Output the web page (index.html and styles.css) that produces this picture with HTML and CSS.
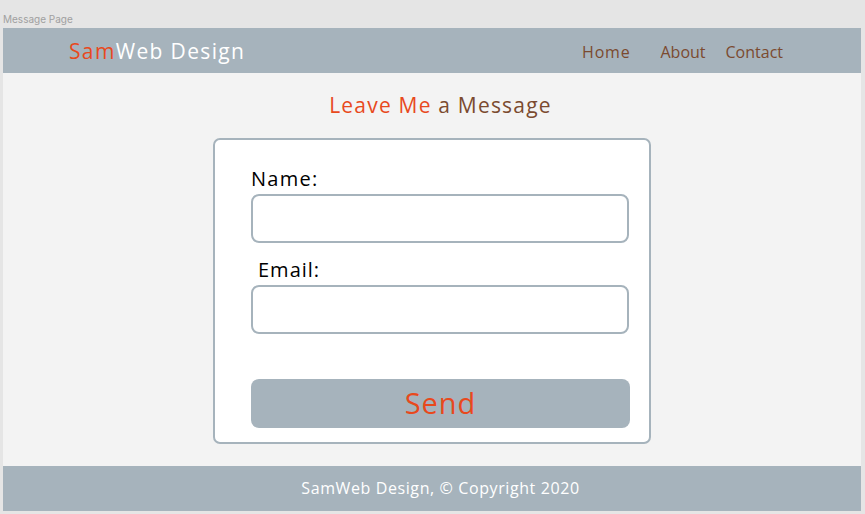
FILE: index.html
```html
<!DOCTYPE html>
<html lang="en">
<head>
<meta charset="utf-8">
<title>Message Page</title>
<link rel="stylesheet" href="styles.css">
</head>
<body>
<div class="canvas-label">Message Page</div>
<div class="frame">
  <header class="topbar">
    <div class="logo"><span class="accent">Sam</span>Web Design</div>
    <nav class="nav">
      <a class="nav-link home">Home</a>
      <a class="nav-link">About</a>
      <a class="nav-link">Contact</a>
    </nav>
  </header>
  <main class="main">
    <h1 class="title"><span class="accent">Leave Me</span> a Message</h1>
    <form class="card">
      <label class="field-label">Name:</label>
      <div class="input"></div>
      <label class="field-label email">Email:</label>
      <div class="input"></div>
      <div class="send">Send</div>
    </form>
  </main>
  <footer class="footer">SamWeb Design, © Copyright 2020</footer>
</div>
</body>
</html>
```
FILE: styles.css
```css
* { box-sizing: border-box; }
html, body { margin: 0; padding: 0; }
body {
  background: #e5e5e5;
  font-family: "Open Sans", "Noto Sans", sans-serif;
  width: 865px;
  height: 514px;
  overflow: hidden;
}
.canvas-label {
  height: 28px;
  padding: 13px 0 0 3px;
  font-family: Inter, "Liberation Sans", sans-serif;
  font-size: 10px;
  line-height: 12px;
  color: #a0a0a0;
}
.frame {
  margin-left: 3px;
  width: 858px;
  height: 483px;
  display: flex;
  flex-direction: column;
  background: #f3f3f3;
}
.accent { color: #e8491d; }
.topbar {
  height: 45px;
  background: #a6b3bc;
  display: flex;
  align-items: center;
  padding-left: 66px;
}
.logo {
  color: #ffffff;
  font-size: 21px;
  letter-spacing: 1.35px;
  line-height: 1;
  padding-top: 1px;
}
.nav {
  margin-left: auto;
  margin-right: 78px;
  display: flex;
  gap: 20px;
  padding-top: 3px;
}
.nav-link {
  color: #7b4a2f;
  font-size: 16px;
  line-height: 1;
}
.nav-link.home { margin-right: 10px; letter-spacing: 0.8px; }
.main {
  flex: 1;
  display: flex;
  flex-direction: column;
  align-items: center;
}
.title {
  margin: 19px 0 0 17px;
  font-weight: 400;
  font-size: 21px;
  line-height: 26px;
  color: #7b4a2f;
  letter-spacing: 1.2px;
}
.card {
  margin-top: 20px;
  width: 438px;
  height: 306px;
  background: #ffffff;
  border: 2px solid #a6b3bc;
  border-radius: 7px;
  padding: 26px 20px 0 36px;
  display: flex;
  flex-direction: column;
}
.field-label {
  color: #000000;
  font-size: 20px;
  line-height: 26px;
  margin-bottom: 2px;
  letter-spacing: 1.3px;
}
.field-label.email {
  margin-left: 7px;
  margin-top: 14px;
  letter-spacing: 1px;
}
.input {
  width: 378px;
  height: 49px;
  border: 2px solid #a6b3bc;
  border-radius: 8px;
  background: #ffffff;
}
.send {
  margin-top: 45px;
  width: 379px;
  height: 49px;
  border-radius: 8px;
  background: #a6b3bc;
  color: #e8491d;
  font-size: 29px;
  line-height: 47px;
  text-align: center;
  letter-spacing: 1px;
}
.footer {
  height: 45px;
  background: #a6b3bc;
  color: #ffffff;
  font-size: 16px;
  line-height: 45px;
  text-align: center;
  padding-left: 17px;
  letter-spacing: 0.6px;
}
```
